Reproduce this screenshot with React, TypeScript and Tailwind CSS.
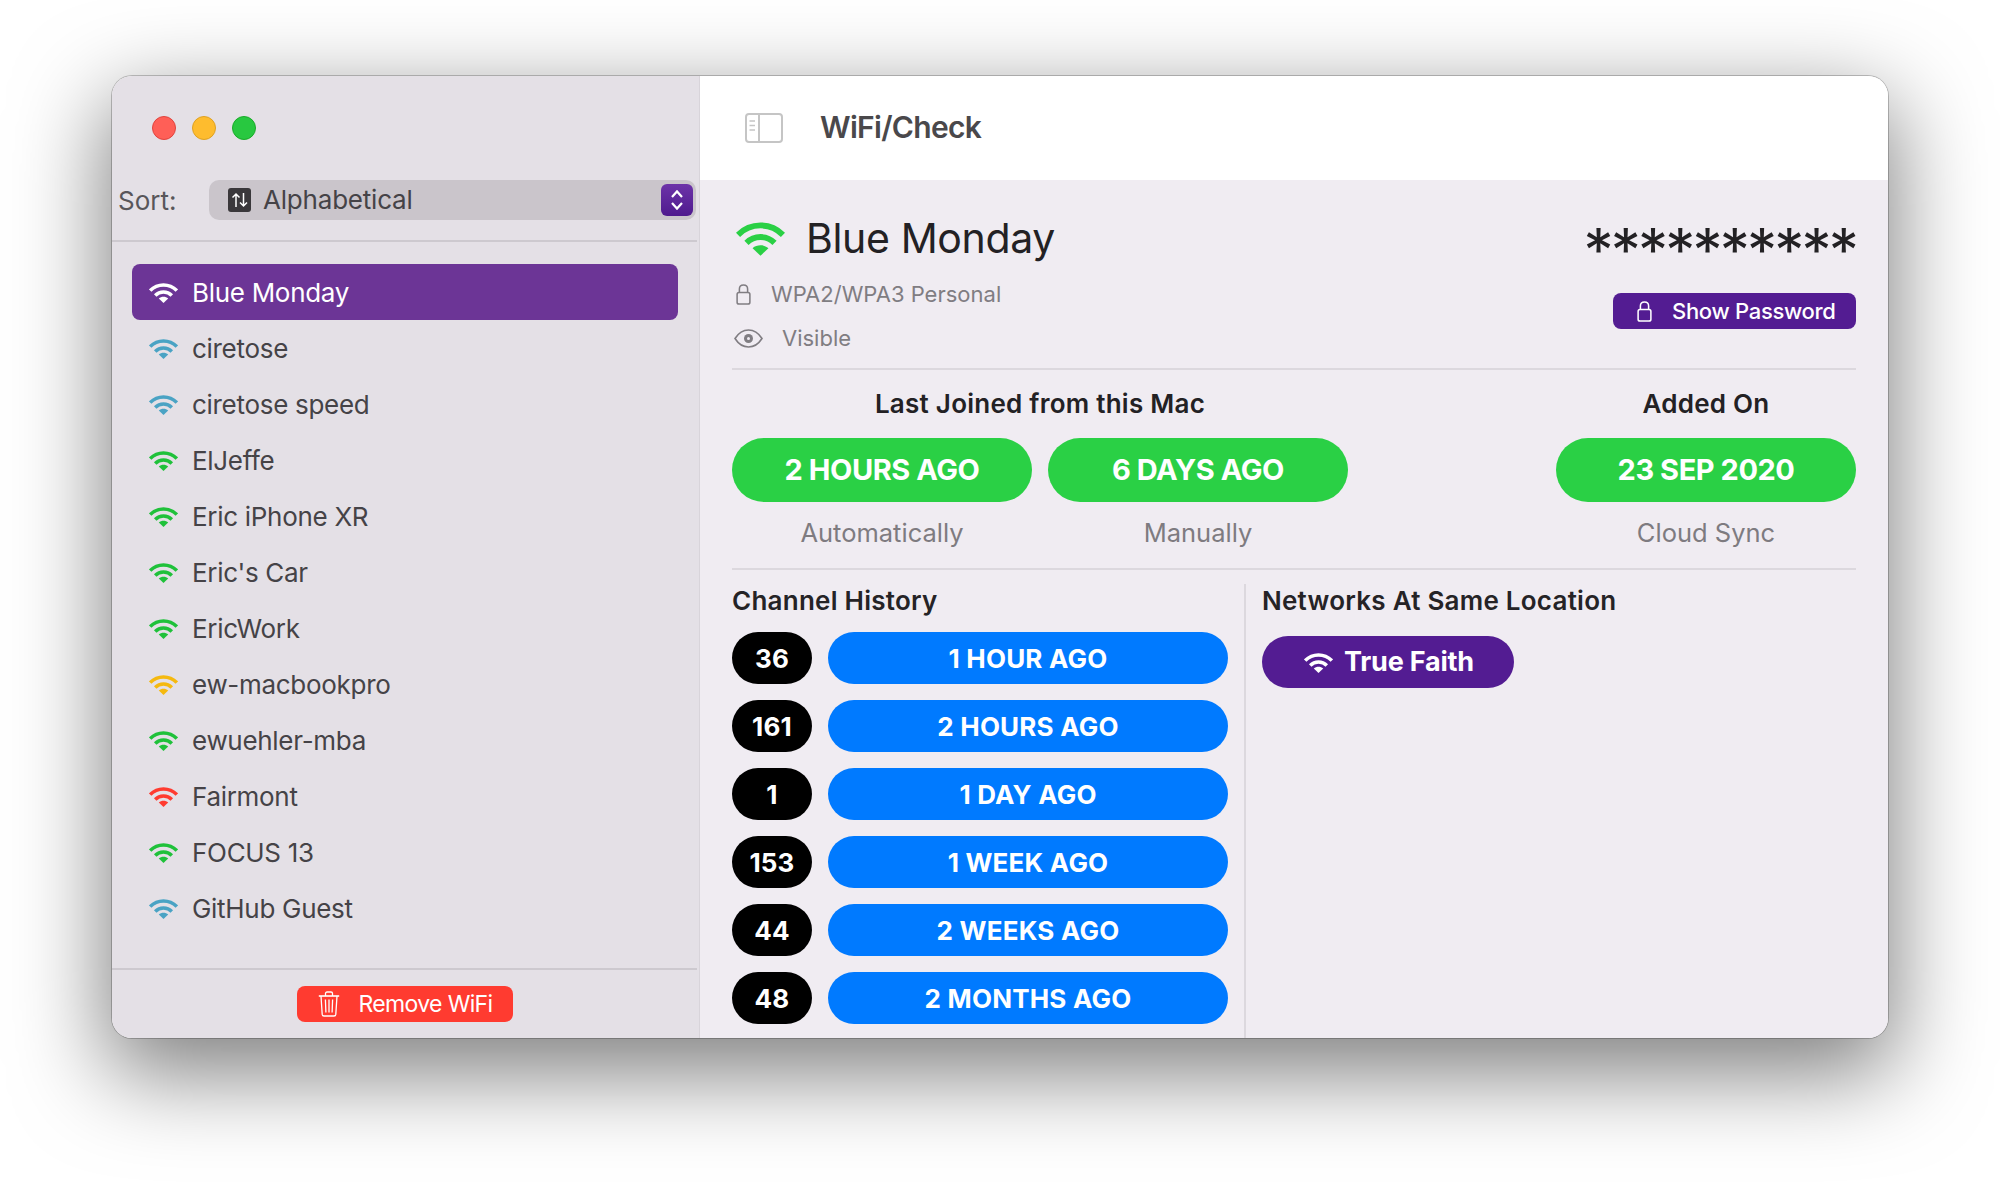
const NETWORKS = [
  { name: 'Blue Monday', color: '#ffffff', selected: true },
  { name: 'ciretose', color: '#4aa3c4' },
  { name: 'ciretose speed', color: '#4aa3c4' },
  { name: 'ElJeffe', color: '#1fc13a' },
  { name: 'Eric iPhone XR', color: '#1fc13a' },
  { name: "Eric's Car", color: '#1fc13a' },
  { name: 'EricWork', color: '#1fc13a' },
  { name: 'ew-macbookpro', color: '#f5b90f' },
  { name: 'ewuehler-mba', color: '#1fc13a' },
  { name: 'Fairmont', color: '#ff3b30' },
  { name: 'FOCUS 13', color: '#1fc13a' },
  { name: 'GitHub Guest', color: '#4aa3c4' },
]

const CHANNELS = [
  { channel: '36', when: '1 HOUR AGO' },
  { channel: '161', when: '2 HOURS AGO' },
  { channel: '1', when: '1 DAY AGO' },
  { channel: '153', when: '1 WEEK AGO' },
  { channel: '44', when: '2 WEEKS AGO' },
  { channel: '48', when: '2 MONTHS AGO' },
]

function Wifi({ color, className }: { color: string; className: string }) {
  return (
    <svg viewBox="0 0 29 21" className={className} fill="none" stroke={color}>
      <path d="M1.2 8.6C8.6 1.2 20.4 1.2 27.8 8.6" strokeWidth="3.5" />
      <path d="M6.2 13.4C10.8 8.8 18.2 8.8 22.8 13.4" strokeWidth="3.5" />
      <path d="M14.5 21L9.8 16.5C12.4 14.3 16.6 14.3 19.2 16.5Z" fill={color} stroke="none" />
    </svg>
  )
}

function Lock({ color, className }: { color: string; className: string }) {
  return (
    <svg viewBox="0 0 15 22" className={className} fill="none" stroke={color} strokeWidth="1.6">
      <rect x="0.8" y="9" width="13.4" height="12" rx="2" />
      <path d="M3.2 9V5.2C3.2 2.6 5 1 7.5 1S11.8 2.6 11.8 5.2V9" />
    </svg>
  )
}

function Trash() {
  return (
    <svg viewBox="0 0 22 26" className="w-[22px] h-[26px]" fill="none" stroke="#fff" strokeWidth="1.3">
      <path d="M0.8 5H21.2" strokeWidth="1.6" />
      <path d="M7.5 5V2.6C7.5 1.6 8.2 1 9 1H13C13.8 1 14.5 1.6 14.5 2.6V5" />
      <path d="M3 5L4.2 23.4C4.3 24.4 5 25 6 25H16C17 25 17.7 24.4 17.8 23.4L19 5" />
      <path d="M7.4 8.5L7.9 21.5M11 8.5V21.5M14.6 8.5L14.1 21.5" />
    </svg>
  )
}

function SectionTitle({ children }: { children: string }) {
  return <div className="h-8 flex items-center text-[26px] font-semibold tracking-[0.25px] text-[#252326]">{children}</div>
}

function StatPill({ value, sub }: { value: string; sub: string }) {
  return (
    <div className="w-[300px] flex flex-col items-center">
      <div className="w-full h-16 rounded-full bg-[#2ad045] flex items-center justify-center text-[29px] font-bold tracking-[-0.45px] text-white">
        {value}
      </div>
      <div className="mt-[11px] h-10 flex items-center text-[25.5px] text-[#7e7b80]">{sub}</div>
    </div>
  )
}

function Sidebar() {
  return (
    <div className="w-[588px] shrink-0 flex flex-col bg-[#e4e0e6] border-r border-[#d8d4da]">
      <div className="h-[104px] flex items-center gap-4 pl-10 shrink-0">
        <div className="w-6 h-6 rounded-full bg-[#ff5f57] border border-[#e0443e]" />
        <div className="w-6 h-6 rounded-full bg-[#febc2e] border border-[#dea123]" />
        <div className="w-6 h-6 rounded-full bg-[#28c840] border border-[#1aab29]" />
      </div>
      <div className="h-10 flex items-center pl-[6px] pr-[3px] shrink-0">
        <span className="w-[91px] text-[26px] text-[#58565a]">Sort:</span>
        <div className="flex-1 h-10 rounded-[10px] bg-[#cac5cb] flex items-center pl-[19px] pr-[3px]">
          <svg viewBox="0 0 23 24" className="w-[23px] h-6">
            <rect width="23" height="24" rx="3" fill="#3a383b" />
            <path d="M8 19V6M4.5 9.5L8 6L11.5 9.5M15.5 5V18M12 14.5L15.5 18L19 14.5" fill="none" stroke="#fff" strokeWidth="1.5" />
          </svg>
          <span className="ml-3 flex-1 pb-[2px] text-[26px] tracking-[-0.2px] text-[#454347]">Alphabetical</span>
          <div className="w-8 h-8 rounded-[6px] bg-linear-to-b from-[#6d33a8] to-[#4f1a8e] flex items-center justify-center">
            <svg viewBox="0 0 14 24" className="w-[14px] h-6" fill="none" stroke="#fff" strokeWidth="2.2">
              <path d="M2 9L7 3.5L12 9M2 15L7 20.5L12 15" />
            </svg>
          </div>
        </div>
      </div>
      <div className="mt-5 mr-[2px] h-[2px] bg-[#cdc9cf] shrink-0" />
      <div className="flex-1 pl-5 pr-[21px] pt-[22px]">
        {NETWORKS.map((n) => (
          <div
            key={n.name}
            className={
              n.selected
                ? 'h-14 flex items-center pl-[17px] rounded-[8px] bg-[#6c3596] text-white text-[26px] tracking-[-0.3px]'
                : 'h-14 flex items-center pl-[17px] text-[#454347] text-[26px] tracking-[-0.3px]'
            }
          >
            <Wifi color={n.color} className="w-[29px] h-[21px] shrink-0" />
            <span className="ml-[14px]">{n.name}</span>
          </div>
        ))}
      </div>
      <div className="mr-[2px] h-[2px] bg-[#cdc9cf] shrink-0" />
      <div className="h-[68px] pt-4 pr-[2px] flex justify-center shrink-0">
        <div className="w-[216px] h-9 rounded-[8px] bg-[#ff3b30] flex items-center pl-[21px] text-white text-[23px] tracking-[-0.65px]">
          <Trash />
          <span className="ml-[19px]">Remove WiFi</span>
        </div>
      </div>
    </div>
  )
}

function Detail() {
  return (
    <div className="flex-1 min-w-0 flex flex-col">
      <div className="h-[104px] shrink-0 bg-white flex items-center pl-[45px]">
        <svg viewBox="0 0 38 30" className="w-[38px] h-[30px]" fill="none" stroke="#c5c5c5" strokeWidth="2">
          <rect x="1" y="1" width="36" height="28" rx="3" />
          <path d="M14 1V29" />
          <path d="M4.5 8H10M4.5 12.5H10M4.5 17H10" strokeWidth="1.6" />
        </svg>
        <span className="ml-[37px] pb-[1px] text-[30px] font-semibold tracking-[-0.7px] text-[#4a484b]">WiFi/Check</span>
      </div>
      <div className="flex-1 min-h-0 bg-[#f0ecf2] pl-8 pr-8 flex flex-col">
        <div className="pt-9 flex justify-between">
          <div>
            <div className="h-11 flex items-center pl-1">
              <Wifi color="#2ad045" className="w-[49px] h-9" />
              <span className="ml-[21px] pt-[2px] text-[41px] tracking-[-0.35px] text-[#232124]">Blue Monday</span>
            </div>
            <div className="mt-3 h-11 flex items-center pl-1 text-[22px] text-[#807d82]">
              <Lock color="#807d82" className="w-[15px] h-[21px]" />
              <span className="ml-5">WPA2/WPA3 Personal</span>
            </div>
            <div className="h-11 flex items-center pl-[2px] text-[22px] text-[#807d82]">
              <svg viewBox="0 0 29 19" className="w-[29px] h-[19px]" fill="none" stroke="#807d82" strokeWidth="1.6">
                <path d="M1 9.5C4.5 4 9 1 14.5 1S24.5 4 28 9.5C24.5 15 20 18 14.5 18S4.5 15 1 9.5Z" />
                <circle cx="14.5" cy="9.5" r="4.5" fill="#807d82" stroke="none" />
                <circle cx="14.5" cy="9.5" r="1.5" fill="#f0ecf2" stroke="none" />
              </svg>
              <span className="ml-[19px]">Visible</span>
            </div>
          </div>
          <div className="flex flex-col items-end">
            <div className="h-12 pt-[19px] flex items-center text-[60px] tracking-[-2.8px] text-[#232124] leading-none">**********</div>
            <div className="mt-[29px] w-[243px] h-9 rounded-[8px] bg-[#531c92] flex items-center pl-6 text-white text-[22px] font-medium tracking-[-0.3px]">
              <Lock color="#fff" className="w-[15px] h-[21px]" />
              <span className="ml-5">Show Password</span>
            </div>
          </div>
        </div>
        <div className="mt-2 h-[2px] bg-[#dcd8de] shrink-0" />

        <div className="flex justify-between pt-[13px]">
          <div className="w-[616px]">
            <div className="h-10 flex items-center justify-center text-[26px] font-semibold tracking-[0.25px] text-[#232124] mb-[15px]">
              Last Joined from this Mac
            </div>
            <div className="flex gap-4">
              <StatPill value="2 HOURS AGO" sub="Automatically" />
              <StatPill value="6 DAYS AGO" sub="Manually" />
            </div>
          </div>
          <div className="w-[300px]">
            <div className="h-10 flex items-center justify-center text-[26px] font-semibold tracking-[0.25px] text-[#232124] mb-[15px]">
              Added On
            </div>
            <StatPill value="23 SEP 2020" sub="Cloud Sync" />
          </div>
        </div>
        <div className="mt-[15px] h-[2px] bg-[#dcd8de] shrink-0" />

        <div className="flex-1 min-h-0 flex pt-[14px]">
          <div className="w-[514px] pr-4 shrink-0 border-r-2 border-[#dcd8de]">
            <SectionTitle>Channel History</SectionTitle>
            <div className="mt-4 flex flex-col gap-4">
              {CHANNELS.map((c) => (
                <div key={c.channel} className="flex gap-4 h-[52px] text-[26px] font-bold tracking-[0.2px] text-white">
                  <div className="w-20 rounded-full bg-black flex items-center justify-center">{c.channel}</div>
                  <div className="w-[400px] rounded-full bg-[#007aff] flex items-center justify-center">{c.when}</div>
                </div>
              ))}
            </div>
          </div>
          <div className="pl-4">
            <SectionTitle>Networks At Same Location</SectionTitle>
            <div className="mt-5 w-[252px] h-[52px] rounded-full bg-[#531c92] flex items-center pl-[42px] text-white text-[27px] font-bold tracking-[-0.2px]">
              <Wifi color="#fff" className="w-[29px] h-[21px]" />
              <span className="ml-[11px]">True Faith</span>
            </div>
          </div>
        </div>
      </div>
    </div>
  )
}

export default function App() {
  return (
    <div className="w-[2000px] h-[1186px] bg-white pt-[76px] pl-[112px] overflow-hidden font-['Inter',sans-serif]">
      <div className="w-[1776px] h-[962px] flex rounded-[20px] overflow-hidden shadow-[0_0_0_1px_rgba(0,0,0,0.22),0_30px_90px_6px_rgba(0,0,0,0.5)]">
        <Sidebar />
        <Detail />
      </div>
    </div>
  )
}
